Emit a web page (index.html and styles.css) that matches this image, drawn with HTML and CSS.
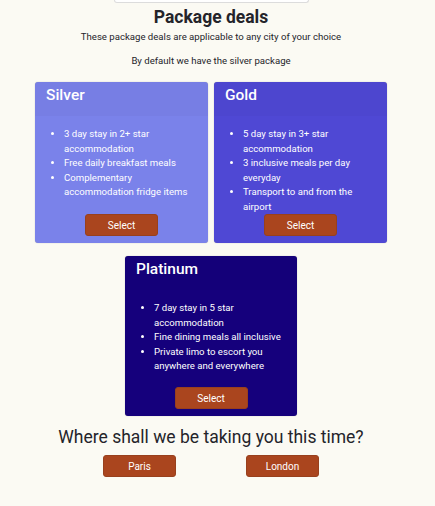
FILE: index.html
```html
<!DOCTYPE html>
<html lang="en">
<head>
<meta charset="utf-8">
<title>Package deals</title>
<link rel="stylesheet" href="styles.css">
</head>
<body>
<div class="page">
  <div class="topbar"></div>
  <h1 class="title">Package deals</h1>
  <p class="lead">These package deals are applicable to any city of your choice</p>
  <p class="lead lead-second">By default we have the silver package</p>

  <div class="cards">
    <div class="card card-silver">
      <div class="card-head">Silver</div>
      <ul class="card-list">
        <li>3 day stay in 2+ star accommodation</li>
        <li>Free daily breakfast meals</li>
        <li>Complementary accommodation fridge items</li>
      </ul>
      <button class="btn">Select</button>
    </div>
    <div class="card card-gold">
      <div class="card-head">Gold</div>
      <ul class="card-list">
        <li>5 day stay in 3+ star accommodation</li>
        <li>3 inclusive meals per day everyday</li>
        <li>Transport to and from the airport</li>
      </ul>
      <button class="btn">Select</button>
    </div>
    <div class="card card-platinum">
      <div class="card-head">Platinum</div>
      <ul class="card-list">
        <li>7 day stay in 5 star accommodation</li>
        <li>Fine dining meals all inclusive</li>
        <li>Private limo to escort you anywhere and everywhere</li>
      </ul>
      <button class="btn">Select</button>
    </div>
  </div>

  <h2 class="question">Where shall we be taking you this time?</h2>
  <div class="cities">
    <button class="btn">Paris</button>
    <button class="btn">London</button>
  </div>
</div>
</body>
</html>
```

FILE: styles.css
```css
html, body {
  margin: 0;
  padding: 0;
  background: #fbfaf3;
}
body {
  font-family: Roboto, "Liberation Sans", sans-serif;
  color: #24242a;
}
.page {
  width: 422px;
  display: flex;
  flex-direction: column;
  align-items: center;
}
.topbar {
  width: 193px;
  height: 2px;
  background: #ffffff;
  border: 1px solid #dcdcdc;
  border-top: none;
  border-radius: 0 0 3px 3px;
}
.title {
  margin: 3px 0 0;
  font-size: 17.5px;
  line-height: 22px;
  font-weight: 700;
}
.lead {
  margin: 2px 0 0;
  font-size: 9.6px;
  line-height: 14px;
}
.lead-second {
  margin-top: 10px;
}
.cards {
  margin-top: 14px;
  display: flex;
  flex-wrap: wrap;
  justify-content: center;
  width: 360px;
  column-gap: 6px;
  row-gap: 13px;
}
.card {
  width: 173px;
  height: 161px;
  box-sizing: border-box;
  border-radius: 3px;
  box-shadow: 0 0 1px rgba(0, 0, 0, 0.35);
  color: #ffffff;
  display: flex;
  flex-direction: column;
  align-items: center;
  padding-bottom: 7px;
}
.card-silver { background: #7a82ea; }
.card-gold { background: #4f48d4; }
.card-platinum { background: #15007c; height: 160px; width: 172px; }
.card-head {
  align-self: stretch;
  box-sizing: border-box;
  height: 34px;
  padding: 3px 11px 0;
  font-size: 15.5px;
  line-height: 20px;
  font-weight: 500;
  background: rgba(0, 0, 0, 0.025);
  border-radius: 3px 3px 0 0;
}
.card-list {
  align-self: stretch;
  margin: 11px 0 0;
  padding: 0 8px 0 29px;
  font-size: 9.6px;
  line-height: 14.5px;
}
.btn {
  width: 73px;
  height: 22px;
  margin-top: auto;
  padding: 0;
  border: 1px solid #98401d;
  border-radius: 3px;
  background: #aa451e;
  color: #ffffff;
  font-family: Roboto, "Liberation Sans", sans-serif;
  font-size: 10px;
}
.question {
  margin: 11px 0 0;
  font-size: 17.5px;
  line-height: 20px;
  font-weight: 400;
}
.cities {
  margin-top: 8px;
  display: flex;
  gap: 70px;
}
```
